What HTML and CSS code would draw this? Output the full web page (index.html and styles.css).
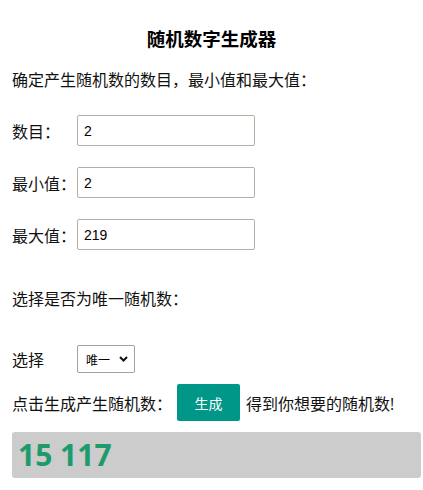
FILE: index.html
```html
<!DOCTYPE html>
<html lang="zh-CN">
<head>
    <title>随机数字生成器</title>
    <meta http-equiv="Content-Type" content="text/html; charset=UTF-8"/>
    <link rel="stylesheet" href="styles.css">
</head>
<body>
<div class="container">
    <h3 class="title">随机数字生成器</h3>
    <p class="intro">确定产生随机数的数目，最小值和最大值：</p>
    <div class="field">
        <label class="field-label">数目：</label>
        <input type="text" class="field-input" value="2">
    </div>
    <div class="field">
        <label class="field-label">最小值：</label>
        <input type="text" class="field-input" value="2">
    </div>
    <div class="field">
        <label class="field-label">最大值：</label>
        <input type="text" class="field-input" value="219">
    </div>
    <p class="unique-text">选择是否为唯一随机数：</p>
    <div class="select-row">
        <label class="field-label">选择</label>
        <div class="select-wrap">
            <select class="unique-select">
                <option>唯一</option>
                <option>不唯一</option>
            </select>
            <svg class="select-arrow" width="9" height="6" viewBox="0 0 9 6">
                <path d="M1 1 L4.5 4.5 L8 1" fill="none" stroke="#111" stroke-width="2"/>
            </svg>
        </div>
    </div>
    <div class="generate-row">
        <span>点击生成产生随机数：</span>
        <button class="generate-button">生成</button>
        <span>得到你想要的随机数!</span>
    </div>
    <div class="result">15 117</div>
</div>
</body>
</html>
```

FILE: styles.css
```css
body {
    background-color: #ffffff;
    margin: 0;
    padding: 0;
    font-family: "Open Sans", "Noto Sans CJK SC", sans-serif;
    color: #111111;
}
.container {
    padding: 0 2px 0 12px;
}
.title {
    margin: 0;
    padding: 27px 10px 0 0;
    height: 24px;
    line-height: 24px;
    font-size: 18.5px;
    font-weight: bold;
    text-align: center;
    color: #000000;
}
.intro {
    margin: 17px 0 0 0;
    height: 24px;
    line-height: 24px;
    font-size: 16px;
}
.field {
    display: flex;
    align-items: center;
    height: 31px;
    margin-top: 21px;
}
.intro + .field {
    margin-top: 23px;
}
.field-label {
    width: 65px;
    font-size: 16px;
    flex-shrink: 0;
}
.field-input {
    box-sizing: border-box;
    width: 178px;
    height: 31px;
    padding: 0 6px;
    border: 1px solid #b8aea4;
    border-radius: 2px;
    font-family: "Liberation Sans", Arial, sans-serif;
    font-size: 14px;
    color: #000000;
}
.unique-text {
    margin: 37px 0 0 0;
    height: 24px;
    line-height: 24px;
    font-size: 16px;
}
.select-row {
    display: flex;
    align-items: center;
    height: 28px;
    margin-top: 34px;
}
.select-wrap {
    position: relative;
    width: 58px;
    height: 28px;
}
.unique-select {
    appearance: none;
    -webkit-appearance: none;
    box-sizing: border-box;
    width: 58px;
    height: 28px;
    margin: 0;
    padding: 0 0 0 8px;
    border: 1px solid #a8a098;
    border-radius: 2px;
    background-color: #ffffff;
    font-family: "Noto Sans CJK SC", sans-serif;
    font-size: 12px;
    color: #000000;
}
.select-arrow {
    position: absolute;
    right: 7px;
    top: 11px;
    pointer-events: none;
}
.generate-row {
    display: flex;
    align-items: center;
    height: 37px;
    margin-top: 11px;
    font-size: 16px;
}
.generate-button {
    width: 63px;
    height: 37px;
    margin: 0 6px 0 5px;
    border: none;
    border-radius: 2px;
    background-color: #009688;
    color: #ffffff;
    font-family: "Noto Sans CJK SC", sans-serif;
    font-size: 14px;
    cursor: pointer;
}
.result {
    margin-top: 11px;
    height: 46px;
    line-height: 46px;
    padding-left: 6px;
    background-color: #cccccc;
    border-radius: 3px;
    font-family: "Open Sans", sans-serif;
    font-size: 30px;
    font-weight: bold;
    color: #1e9b6c;
}
```
